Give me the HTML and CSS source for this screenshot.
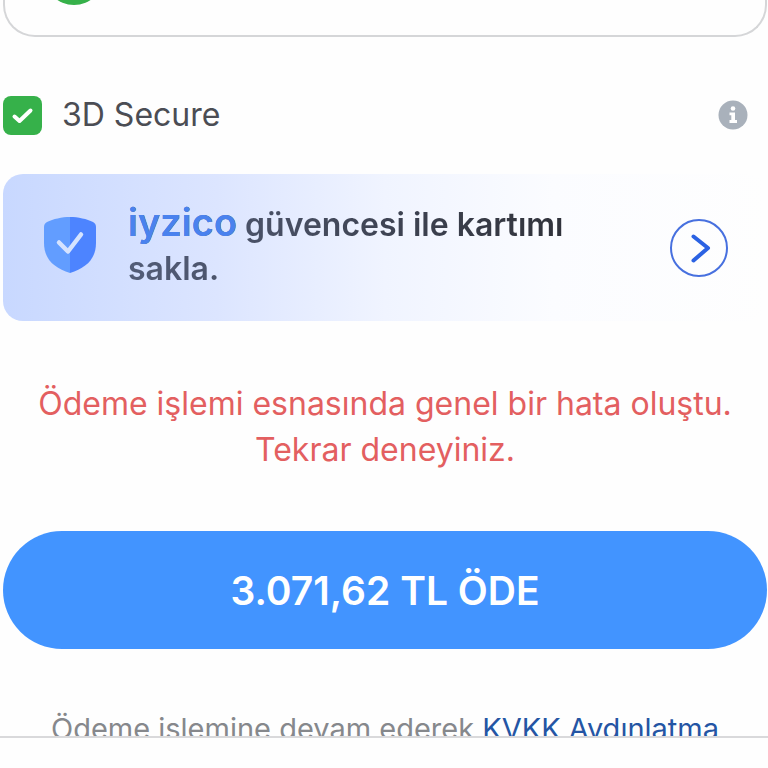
FILE: index.html
```
<!DOCTYPE html>
<html lang="tr">
<head>
  <meta charset="UTF-8" />
  <meta name="viewport" content="width=device-width, initial-scale=1.0" />
  <title>Ödeme</title>
  <link rel="stylesheet" href="styles.css">
</head>
<body>
  <main class="checkout">
    <div class="card-box">
      <svg class="card-status" viewBox="0 55 60 5" aria-hidden="true"><circle cx="30" cy="30" r="30" fill="#36b14a"/></svg>
    </div>

    <div class="secure-row">
      <label class="secure-label" for="secure">
        <input type="checkbox" id="secure" class="secure-input" checked>
        <span class="secure-check">
          <svg viewBox="0 0 39 39" aria-hidden="true"><path d="M11.5 20.5 L16.5 25 L27.500 14.500" fill="none" stroke="#fff" stroke-width="4" stroke-linecap="round" stroke-linejoin="round"/></svg>
        </span>
        <span>3D Secure</span>
      </label>
      <button type="button" class="info-btn" aria-label="Bilgi">
        <svg viewBox="0 0 30 30" aria-hidden="true">
          <circle cx="15" cy="15" r="14.5" fill="#a9b1bb"/>
          <circle cx="15" cy="8.5" r="2.3" fill="#fff"/>
          <path d="M11.5 12.5 H17 V20 H19 V23 H11.5 V20 H13.3 V15.3 H11.5 Z" fill="#fff"/>
        </svg>
      </button>
    </div>

    <section class="save-card">
      <svg class="shield" viewBox="0 0 52 56" aria-hidden="true">
        <path d="M26 0 C18 0 9 2 3 5 Q0 6.500 0 10 V26 C0 42 10 51 26 56 Z" fill="#629dff"/>
        <path d="M26 0 C34 0 43 2 49 5 Q52 6.500 52 10 V26 C52 42 42 51 26 56 Z" fill="#4d84ff"/>
        <path d="M15 25.500 L24 34.500 L37 17.500" fill="none" stroke="#d5e3ff" stroke-width="4.500" stroke-linecap="round" stroke-linejoin="round"/>
      </svg>
      <p class="save-text"><span class="brand">iyzico</span> güvencesi ile kartımı sakla.</p>
      <button type="button" class="next-btn" aria-label="Devam">
        <svg viewBox="0 0 54 54" aria-hidden="true"><path d="M21.500 15.500 L36 27 L21.500 39.500" fill="none" stroke="#2b62e3" stroke-width="4" stroke-linecap="round" stroke-linejoin="round"/></svg>
      </button>
    </section>

    <p class="error">Ödeme işlemi esnasında genel bir hata oluştu. Tekrar deneyiniz.</p>

    <button type="button" class="pay-btn">3.071,62 TL ÖDE</button>

    <p class="legal">Ödeme işlemine devam ederek <a href="#">KVKK Aydınlatma</a></p>
  </main>
  <footer class="bottom-bar"></footer>
</body>
</html>
```
FILE: styles.css
```
* { box-sizing: border-box; }
body {
  margin: 0;
  height: 100vh;
  display: flex;
  flex-direction: column;
  background: #fefefe;
  color: #4b4d54;
  font-family: Inter, "Liberation Sans", sans-serif;
  font-size: 32px;
}
p { margin: 0; }
svg { display: block; }
button { padding: 0; border: none; background: none; font-family: inherit; cursor: pointer; }

.checkout { flex: 1; min-height: 0; overflow: hidden; padding: 0 1px 0 3px; }

.card-box {
  height: 37px;
  padding-left: 39px;
  border: 2px solid #d5d6d8;
  border-top: none;
  border-radius: 0 0 32px 32px;
}
.card-status { width: 60px; height: 5px; }

.secure-row {
  display: flex;
  align-items: center;
  justify-content: space-between;
  padding-right: 19px;
  margin: 58px 0 39px;
}
.secure-label { display: flex; align-items: center; gap: 20px; line-height: 40px; cursor: pointer; }
.secure-input { position: absolute; opacity: 0; }
.secure-check { width: 39px; height: 39px; border-radius: 8px; background: #dfe1e4; }
.secure-input:checked + .secure-check { background: #36b14a; }
.info-btn { width: 30px; height: 30px; }

.save-card {
  display: flex;
  align-items: center;
  min-height: 147px;
  padding: 0 39px 0 41px;
  border-radius: 20px;
  background: linear-gradient(90deg, #c8d8ff 0%, #dce5ff 28%, #f0f4ff 50%, #fbfcff 72%, #fefefe 100%);
}
.shield { flex: none; width: 52px; height: 56px; margin-bottom: 6px; }
.save-text {
  flex: 1;
  margin: 0 100px 2px 32px;
  font-weight: 600;
  line-height: 44px;
  background: linear-gradient(90deg, #535d78, #30323a);
  -webkit-background-clip: text;
  background-clip: text;
  color: transparent;
}
.brand {
  color: #4a82ee;
  font-weight: 600;
  font-size: 38px;
  line-height: 38px;
}
.next-btn { flex: none; width: 58px; height: 58px; border: 2px solid #4770df; border-radius: 50%; }

.error { margin-top: 60px; padding: 0 24px; color: #e35f60; line-height: 46px; text-align: center; }

.pay-btn {
  width: 100%;
  height: 118px;
  margin-top: 58px;
  border-radius: 60px;
  background: #4294ff;
  color: #fff;
  font-size: 39px;
  font-weight: 600;
}

.legal { margin-top: 58px; color: #86888c; font-size: 29px; line-height: 44px; text-align: center; white-space: nowrap; }
.legal a { color: #2455a4; text-decoration: none; }

.bottom-bar { height: 32px; border-top: 2px solid #d9d9db; background: #fefefe; }
```
